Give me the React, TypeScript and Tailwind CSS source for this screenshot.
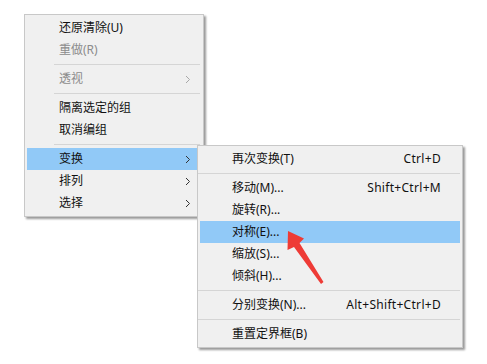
import React from 'react'

// ─── Types ────────────────────────────────────────────────────────────────────

type Item =
  | { kind: 'sep' }
  | {
      kind: 'item'
      label: string
      shortcut?: string
      sub?: boolean
      disabled?: boolean
      active?: boolean
    }

// ─── Data ─────────────────────────────────────────────────────────────────────

const MAIN_MENU: Item[] = [
  { kind: 'item', label: '还原清除(U)' },
  { kind: 'item', label: '重做(R)', disabled: true },
  { kind: 'sep' },
  { kind: 'item', label: '透视', sub: true, disabled: true },
  { kind: 'sep' },
  { kind: 'item', label: '隔离选定的组' },
  { kind: 'item', label: '取消编组' },
  { kind: 'sep' },
  { kind: 'item', label: '变换', sub: true, active: true },
  { kind: 'item', label: '排列', sub: true },
  { kind: 'item', label: '选择', sub: true },
]

const SUB_MENU: Item[] = [
  { kind: 'item', label: '再次变换(T)', shortcut: 'Ctrl+D' },
  { kind: 'sep' },
  { kind: 'item', label: '移动(M)...', shortcut: 'Shift+Ctrl+M' },
  { kind: 'item', label: '旋转(R)...' },
  { kind: 'item', label: '对称(E)...', active: true },
  { kind: 'item', label: '缩放(S)...' },
  { kind: 'item', label: '倾斜(H)...' },
  { kind: 'sep' },
  { kind: 'item', label: '分别变换(N)...', shortcut: 'Alt+Shift+Ctrl+D' },
  { kind: 'sep' },
  { kind: 'item', label: '重置定界框(B)' },
]

// ─── Pieces ───────────────────────────────────────────────────────────────────

function Chevron({ dim }: { dim?: boolean }) {
  return (
    <svg width="6" height="9" viewBox="0 0 6 9" className="shrink-0">
      <path
        d="M1 1 L4.5 4.5 L1 8"
        fill="none"
        stroke={dim ? '#a8a8a8' : '#333333'}
        strokeWidth="1"
      />
    </svg>
  )
}

function MenuRows({ items, sepInset }: { items: Item[]; sepInset: string }) {
  return (
    <>
      {items.map((it, i) =>
        it.kind === 'sep' ? (
          <div key={i} className="py-[3px]">
            <div className={`h-px bg-[#d5d5d5] ${sepInset}`} />
          </div>
        ) : (
          <div
            key={i}
            className={`h-[22px] flex items-center justify-between pl-[32px] ${
              it.active ? 'bg-[#91c9f7]' : ''
            } ${it.sub ? 'pr-[10px]' : 'pr-[19px]'}`}
          >
            <span className={it.disabled ? 'text-[#8c8c8c]' : 'text-[#111111]'}>
              {it.label}
            </span>
            {it.shortcut && <span className="text-[#111111] tracking-[0.3px]">{it.shortcut}</span>}
            {it.sub && <Chevron dim={it.disabled} />}
          </div>
        ),
      )}
    </>
  )
}

// ─── Component ────────────────────────────────────────────────────────────────

export default function App() {
  return (
    <div
      className="relative w-[487px] h-[364px] bg-white overflow-hidden text-[12px] leading-none"
      style={{ fontFamily: '"Noto Sans", "Noto Sans CJK SC", sans-serif' }}
    >
      {/* Main context menu */}
      <div className="absolute left-[24px] top-[14px] w-[180px] bg-[#f0f0f0] border border-[#c8c8c8] p-[2px] shadow-[2px_2px_2px_rgba(0,0,0,0.4)]">
        <MenuRows items={MAIN_MENU} sepInset="ml-[27px] mr-[1px]" />
      </div>

      {/* Transform submenu */}
      <div className="absolute left-[197px] top-[145px] w-[266px] bg-[#f0f0f0] border border-[#c8c8c8] p-[2px] shadow-[2px_2px_2px_rgba(0,0,0,0.4)]">
        <MenuRows items={SUB_MENU} sepInset="-ml-[2px] mr-0" />
      </div>

      {/* Red annotation arrow */}
      <svg className="absolute left-0 top-0 pointer-events-none" width="487" height="364">
        <polygon
          points="288,231 304,238.5 299.5,243 323.5,282 321,284 294,247 287.5,250"
          fill="#ee3b36"
        />
      </svg>
    </div>
  )
}
